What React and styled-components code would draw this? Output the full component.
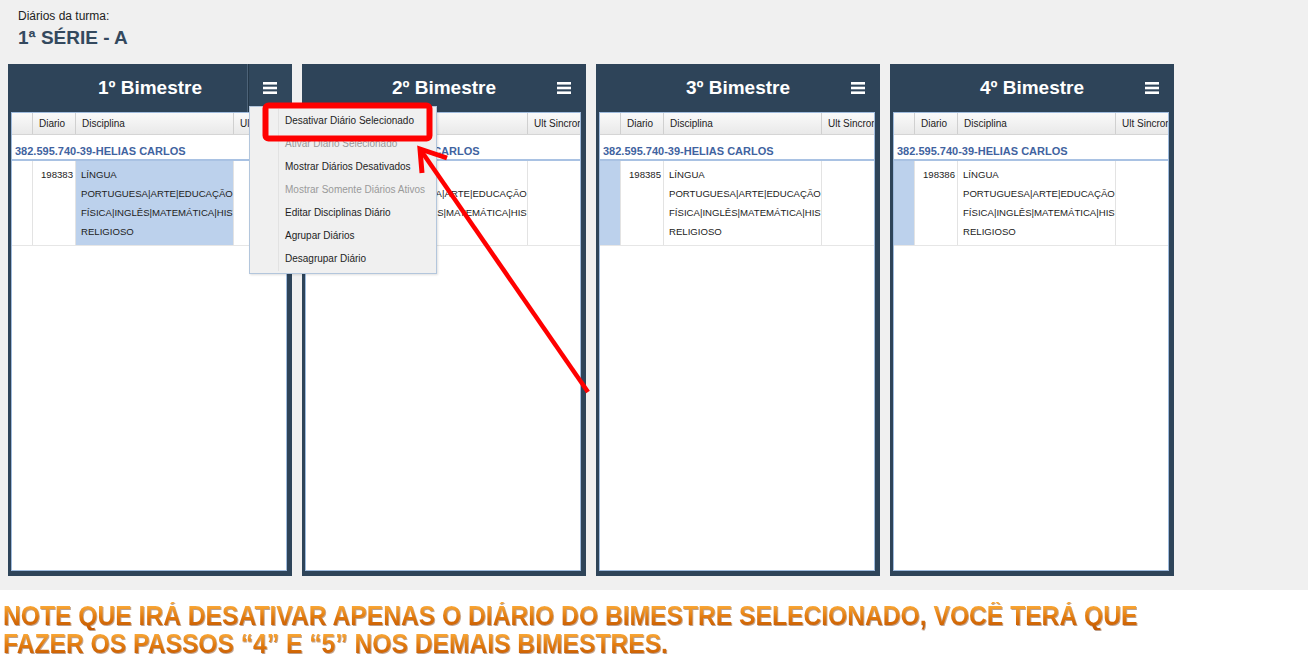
import React from "react";
import styled, { createGlobalStyle } from "styled-components";

const GlobalStyle = createGlobalStyle`
  html, body {
    margin: 0;
    padding: 0;
    background: #ffffff;
    font-family: "Liberation Sans", Arial, sans-serif;
  }
  * {
    box-sizing: border-box;
  }
`;

const Screen = styled.div`
  position: relative;
  width: 1308px;
  height: 590px;
  background: #f0f0f0;
  padding: 9px 0 0 8px;
`;

const Heading = styled.div`
  padding-left: 10px;
  color: #2b2b2b;
`;

const Caption = styled.div`
  font-size: 12px;
  line-height: 14px;
  color: #222;
`;

const ClassName = styled.div`
  margin-top: 4px;
  font-size: 19px;
  line-height: 22px;
  font-weight: bold;
  color: #34495e;
`;

const PanelRow = styled.div`
  display: flex;
  gap: 10px;
  margin-top: 15px;
`;

const Panel = styled.section`
  width: 284px;
  height: 512px;
  background: #2e4459;
  padding: 0 5px 5px 3px;
  display: flex;
  flex-direction: column;
`;

const PanelHeader = styled.header`
  height: 48px;
  margin: 0 -5px 0 -3px;
  display: grid;
  grid-template-columns: 45px 1fr 45px;
  align-items: stretch;
`;

const PanelTitle = styled.h2`
  grid-column: 2;
  margin: 0;
  align-self: center;
  text-align: center;
  color: #ffffff;
  font-size: 19px;
  font-weight: bold;
  padding-bottom: 1px;
`;

const MenuButton = styled.div`
  grid-column: 3;
  position: relative;
  display: flex;
  align-items: center;
  justify-content: center;
  background: ${(p) => (p.$open ? "#30475c" : "transparent")};
  border-left: 1px solid ${(p) => (p.$open ? "#4d6378" : "transparent")};
  box-shadow: ${(p) => (p.$open ? "inset 1px 0 0 #243748" : "none")};
`;

const Burger = () => (
  <svg width="14" height="12" viewBox="0 0 14 12">
    <rect x="0" y="0" width="14" height="2.6" fill="#fff" />
    <rect x="0" y="4.7" width="14" height="2.6" fill="#fff" />
    <rect x="0" y="9.4" width="14" height="2.6" fill="#fff" />
  </svg>
);

const Menu = styled.ul`
  position: absolute;
  left: 1px;
  top: 42px;
  z-index: 10;
  width: 188px;
  margin: 0;
  padding: 2px 0 3px;
  list-style: none;
  background: #f0f0f0;
  border: 1px solid #b3c6dc;
  box-shadow: 1px 1px 2px rgba(0, 0, 0, 0.12);

  &::before {
    content: "";
    position: absolute;
    left: 28px;
    top: 2px;
    bottom: 2px;
    border-left: 1px solid #e2e2e2;
  }
`;

const MenuItem = styled.li`
  height: 23px;
  line-height: 23px;
  padding-left: 35px;
  font-size: 10px;
  white-space: nowrap;
  color: ${(p) => (p.$disabled ? "#9a9a9a" : "#1e1e1e")};
`;

const Grid = styled.div`
  flex: 1;
  background: #ffffff;
  border: 1px solid #9fbbdd;
  border-top: 0;
  overflow: hidden;
`;

const ColumnRow = styled.div`
  display: grid;
  grid-template-columns: 20px 43px 158px 1fr;
  height: 23px;
  background: linear-gradient(#fafafa, #e9e9e9);
  border-top: 1px solid #9fbbdd;
  border-bottom: 1px solid #d5d5d5;
`;

const ColumnHead = styled.div`
  border-left: ${(p) => (p.$first ? "0" : "1px solid #d0d0d0")};
  padding-left: 6px;
  font-size: 10px;
  line-height: 21px;
  color: #222;
  white-space: nowrap;
  overflow: hidden;
`;

const GroupRow = styled.div`
  height: 26px;
  padding: 10px 0 0 3px;
  border-bottom: 2px solid #a9c2e3;
  font-size: 11px;
  line-height: 13px;
  font-weight: bold;
  color: #3f63a0;
  white-space: nowrap;
`;

const DataRow = styled.div`
  display: grid;
  grid-template-columns: 20px 43px 158px 1fr;
  border-bottom: 1px solid #e6e6e6;
`;

const Cell = styled.div`
  border-left: ${(p) => (p.$first ? "0" : "1px solid #e3e3e3")};
  background: ${(p) => (p.$selected ? "#bcd1ec" : "#ffffff")};
  padding: 4px ${(p) => (p.$num ? "2px" : "0")} 4px ${(p) => (p.$num ? "0" : "5px")};
  text-align: ${(p) => (p.$num ? "right" : "left")};
  font-size: 9.6px;
  line-height: 19px;
  color: #222;
  overflow: hidden;
`;

const Line = styled.div`
  white-space: nowrap;
`;

const Overlay = styled.svg`
  position: absolute;
  left: 0;
  top: 0;
  pointer-events: none;
  z-index: 20;
`;

const Note = styled.div`
  padding: 12px 0 0 3px;
`;

const NoteLine = styled.div`
  display: inline-block;
  font-family: "Liberation Sans", Arial, sans-serif;
  font-size: 28px;
  line-height: 28px;
  font-weight: bold;
  white-space: nowrap;
  transform: scaleX(0.88);
  transform-origin: left center;
  background: linear-gradient(#f8a534 15%, #e0780d 55%, #c05500);
  -webkit-background-clip: text;
  background-clip: text;
  color: transparent;
  filter: drop-shadow(1px 1px 0 rgba(110, 45, 0, 0.45));
`;

const terms = [
  { title: "1º Bimestre", diario: "198383", open: true },
  { title: "2º Bimestre", diario: "198384" },
  { title: "3º Bimestre", diario: "198385" },
  { title: "4º Bimestre", diario: "198386" },
];

const menuItems = [
  { label: "Desativar Diário Selecionado" },
  { label: "Ativar Diário Selecionado", disabled: true },
  { label: "Mostrar Diários Desativados" },
  { label: "Mostrar Somente Diários Ativos", disabled: true },
  { label: "Editar Disciplinas Diário" },
  { label: "Agrupar Diários" },
  { label: "Desagrupar Diário" },
];

function TermPanel({ term }) {
  return (
    <Panel>
      <PanelHeader>
        <PanelTitle>{term.title}</PanelTitle>
        <MenuButton $open={term.open}>
          <Burger />
          {term.open && (
            <Menu>
              {menuItems.map((m) => (
                <MenuItem key={m.label} $disabled={m.disabled}>
                  {m.label}
                </MenuItem>
              ))}
            </Menu>
          )}
        </MenuButton>
      </PanelHeader>
      <Grid>
        <ColumnRow>
          <ColumnHead $first />
          <ColumnHead>Diario</ColumnHead>
          <ColumnHead>Disciplina</ColumnHead>
          <ColumnHead>Ult Sincronização</ColumnHead>
        </ColumnRow>
        <GroupRow>382.595.740-39-HELIAS CARLOS</GroupRow>
        <DataRow>
          <Cell $first $selected={!term.open} />
          <Cell $num>{term.diario}</Cell>
          <Cell $selected={term.open}>
            <Line>LÍNGUA</Line>
            <Line>PORTUGUESA|ARTE|EDUCAÇÃO</Line>
            <Line>FÍSICA|INGLÊS|MATEMÁTICA|HISTÓRIA</Line>
            <Line>RELIGIOSO</Line>
          </Cell>
          <Cell />
        </DataRow>
      </Grid>
    </Panel>
  );
}

export default function App() {
  return (
    <>
      <GlobalStyle />
      <Screen>
        <Heading>
          <Caption>Diários da turma:</Caption>
          <ClassName>1ª SÉRIE - A</ClassName>
        </Heading>
        <PanelRow>
          {terms.map((t) => (
            <TermPanel key={t.title} term={t} />
          ))}
        </PanelRow>
        <Overlay width="1308" height="590">
          <rect x="265.5" y="105.5" width="164" height="33" rx="3" fill="none" stroke="#ff0000" strokeWidth="6" />
          <line x1="588" y1="392" x2="422" y2="152" stroke="#ff0000" strokeWidth="4.5" />
          <polyline points="422,173 420,149 447,158" fill="none" stroke="#ff0000" strokeWidth="5" strokeLinejoin="miter" />
        </Overlay>
      </Screen>
      <Note>
        <NoteLine>NOTE QUE IRÁ DESATIVAR APENAS O DIÁRIO DO BIMESTRE SELECIONADO, VOCÊ TERÁ QUE</NoteLine>
        <br />
        <NoteLine>FAZER OS PASSOS “4” E “5” NOS DEMAIS BIMESTRES.</NoteLine>
      </Note>
    </>
  );
}
